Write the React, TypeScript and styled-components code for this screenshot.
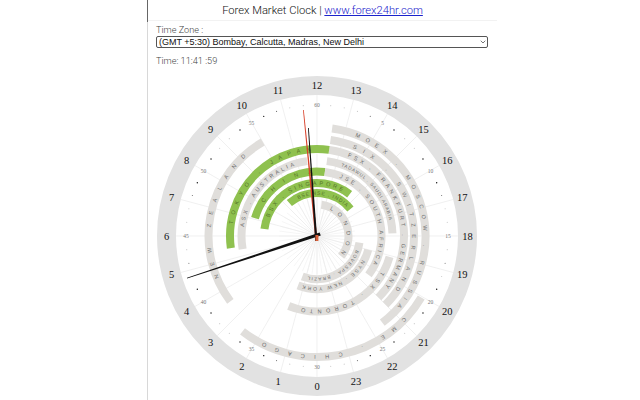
import styled, { createGlobalStyle } from 'styled-components';
import { ChevronDown } from 'lucide-react';

const GlobalStyle = createGlobalStyle`
  html, body {
    margin: 0;
    height: 100%;
    overflow: hidden;
    background: #fff;
    font-family: "Roboto", "Liberation Sans", sans-serif;
  }
`;

const Page = styled.div`
  width: 640px;
  height: 400px;
  padding-left: 147px;
  box-sizing: border-box;
  overflow: hidden;
`;

const Panel = styled.div`
  width: 350px;
  height: 400px;
  box-sizing: border-box;
  border-left: 1px solid #d8d8d8;
  position: relative;
`;

const TopMark = styled.div`
  position: absolute;
  left: -1px;
  top: 0;
  width: 1px;
  height: 22px;
  background: #666;
`;

const Header = styled.div`
  height: 20px;
  line-height: 22px;
  text-align: center;
  font-size: 11.2px;
  font-weight: 300;
  color: #111;
  border-bottom: 1px solid #f2f2f2;
  white-space: nowrap;

  a {
    color: #1a22cc;
  }
`;

const Form = styled.div`
  padding: 3px 9px 0 8px;
`;

const Label = styled.div`
  font-size: 9.2px;
  line-height: 12px;
  font-weight: 300;
  color: #444;
`;

const SelectBox = styled.div`
  position: relative;
  height: 12px;
  margin-bottom: 7px;

  svg {
    position: absolute;
    right: 1px;
    top: 2px;
    color: #333;
    pointer-events: none;
  }
`;

const ZoneSelect = styled.select`
  display: block;
  width: 100%;
  height: 12px;
  margin: 0;
  padding: 0 0 0 2px;
  appearance: none;
  font-family: "Liberation Sans", sans-serif;
  font-size: 9px;
  line-height: 10px;
  color: #111;
  background: #fff;
  border: 1px solid #555;
  border-radius: 2px;
`;

const ClockFace = styled.svg`
  display: block;
  margin: 8px 0 0 -1px;
`;

const HourLabel = styled.text`
  font-family: "Liberation Serif", serif;
  font-size: 10.5px;
  fill: #111;
  text-anchor: middle;
  dominant-baseline: central;
`;

const MinuteLabel = styled.text`
  font-family: "Liberation Serif", serif;
  font-size: 5.5px;
  fill: #777;
  text-anchor: middle;
  dominant-baseline: central;
`;

const BandText = styled.text<{ $open: boolean; $size: number }>`
  font-family: "Liberation Sans", sans-serif;
  font-size: ${(p) => p.$size}px;
  fill: ${(p) => (p.$open ? '#557528' : '#6e6e6e')};
`;

interface Band {
  id: string;
  r: number;
  from: number;
  to: number;
  open: boolean;
  text: string;
  textFrom: number;
  textTo: number;
  size?: number;
}

const CX = 170;
const CY = 161;

const bands: Band[] = [
  { id: 'moex', r: 108.5, from: 8, to: 143, open: false, text: 'MOEX . MOSCOW . RUSSIA', textFrom: 21, textTo: 129 },
  { id: 'nz', r: 108.5, from: 233, to: 330, open: false, text: 'NEW ZEALAND', textFrom: 247, textTo: 316 },
  { id: 'cme', r: 121, from: 120.5, to: 218, open: false, text: 'CME . CHICAGO', textFrom: 133, textTo: 205 },
  { id: 'six', r: 97, from: 8, to: 135, open: false, text: 'SIX . SWITZERLAND', textFrom: 22, textTo: 122 },
  { id: 'fsx', r: 87, from: 8, to: 135, open: false, text: 'FSX . FRANKFURT . GERMANY', textFrom: 21, textTo: 124 },
  { id: 'tokyo', r: 87, from: 262, to: 368, open: true, text: 'TOKYO . JAPAN', textFrom: 278, textTo: 353 },
  { id: 'tad', r: 75.5, from: 7.5, to: 88, open: false, text: 'TADAWUL . SAUDI ARABIA', textFrom: 19, textTo: 75, size: 4.6 },
  { id: 'asx', r: 75.5, from: 260, to: 352.5, open: false, text: 'ASX . AUSTRALIA', textFrom: 277, textTo: 339 },
  { id: 'tsx', r: 75.5, from: 106, to: 202, open: false, text: 'TSX . TORONTO', textFrom: 119, textTo: 189 },
  { id: 'china', r: 64.5, from: 286, to: 367, open: true, text: 'CHINA', textFrom: 302, textTo: 352 },
  { id: 'jse', r: 64.5, from: 7, to: 127, open: false, text: 'JSE . SOUTH AFRICA', textFrom: 21, textTo: 113 },
  { id: 'bsx', r: 53, from: 277.5, to: 398, open: true, text: 'BSX . SINGAPORE', textFrom: 291, textTo: 385 },
  { id: 'nyse', r: 53, from: 105, to: 201, open: false, text: 'NYSE . NEW YORK', textFrom: 118, textTo: 192, size: 5 },
  { id: 'bse', r: 43, from: 320, to: 411, open: true, text: 'BSE NSE . INDIA', textFrom: 333, textTo: 400, size: 5 },
  { id: 'bov', r: 43, from: 99, to: 200, open: false, text: 'BOVESPA . BRAZIL', textFrom: 110, textTo: 188, size: 4.6 },
  { id: 'lon', r: 31.5, from: 8, to: 130, open: false, text: 'LONDON', textFrom: 26, textTo: 118 },
];

const strongDots = [6, 9, 11, 19, 21, 24, 26, 34, 36, 39, 41, 49, 51, 54, 56];
const mediumDots = [4, 12, 17, 27, 33, 43, 48, 57];

const polar = (r: number, deg: number) => {
  const a = ((deg - 90) * Math.PI) / 180;
  return [CX + r * Math.cos(a), CY + r * Math.sin(a)];
};

const arc = (r: number, from: number, to: number) => {
  const [x1, y1] = polar(r, from);
  const [x2, y2] = polar(r, to);
  return `M${x1.toFixed(2)} ${y1.toFixed(2)}A${r} ${r} 0 ${to - from > 180 ? 1 : 0} 1 ${x2.toFixed(2)} ${y2.toFixed(2)}`;
};

const range = (n: number) => Array.from({ length: n }, (_, i) => i);

function Clock() {
  return (
    <ClockFace width={340} height={330} viewBox="0 0 340 330">
      <circle cx={CX} cy={CY} r={150.5} fill="none" stroke="#e2e2e2" strokeWidth={19} />

      {range(24).map((i) => {
        const [x, y] = polar(141, i * 15);
        return <line key={i} x1={CX} y1={CY} x2={x} y2={y} stroke="#e9e9e9" strokeWidth={0.7} />;
      })}
      {range(48).map((i) => {
        const [x, y] = polar(38, i * 7.5);
        return <line key={i} x1={CX} y1={CY} x2={x} y2={y} stroke="#ececec" strokeWidth={0.5} />;
      })}

      {range(60).map((m) => {
        const [x, y] = polar(131, m * 6);
        if (m % 5 === 0) {
          return (
            <MinuteLabel key={m} x={x} y={y}>
              {m === 0 ? 60 : m}
            </MinuteLabel>
          );
        }
        const strong = strongDots.includes(m);
        const medium = mediumDots.includes(m);
        return (
          <circle
            key={m}
            cx={x}
            cy={y}
            r={strong ? 0.7 : 0.6}
            fill={strong ? '#111' : medium ? '#777' : '#ccc'}
          />
        );
      })}

      {bands.map((b) => (
        <path
          key={b.id}
          d={arc(b.r, b.from, b.to)}
          fill="none"
          stroke={b.open ? '#8fc14f' : '#e0dedb'}
          strokeWidth={8}
        />
      ))}

      {bands.map((b) => {
        const size = b.size ?? 5.6;
        const textR = b.r - size * 0.36;
        const length = (((b.textTo - b.textFrom) * Math.PI) / 180) * textR + size * 0.7;
        return (
          <g key={b.id}>
            <path id={`t-${b.id}`} d={arc(textR, b.textFrom, b.textFrom + 170)} fill="none" />
            <BandText $open={b.open} $size={size}>
              <textPath href={`#t-${b.id}`} textLength={length} lengthAdjust="spacing">
                {b.text}
              </textPath>
            </BandText>
          </g>
        );
      })}

      {range(24).map((h) => {
        const [x, y] = polar(150.5, (h - 12) * 15);
        return (
          <HourLabel key={h} x={x} y={y}>
            {h}
          </HourLabel>
        );
      })}

      <polygon points="156,35 168.4,166 170.6,166 156.8,35" fill="#d8402a" />
      <polygon points="161,53 168.2,166 170.4,165.8 161.8,53" fill="#111" />
      <polygon points="40,202.8 172.6,157.6 173.8,160.6 40,203.6" fill="#111" />
      <rect x={168.4} y={160} width={3} height={6} fill="#d8603a" />
    </ClockFace>
  );
}

export default function App() {
  return (
    <Page>
      <GlobalStyle />
      <Panel>
        <TopMark />
        <Header>
          Forex Market Clock | <a href="#site">www.forex24hr.com</a>
        </Header>
        <Form>
          <Label>Time Zone :</Label>
          <SelectBox>
            <ZoneSelect defaultValue="ist">
              <option value="ist">(GMT +5:30) Bombay, Calcutta, Madras, New Delhi</option>
            </ZoneSelect>
            <ChevronDown size={8} strokeWidth={2} />
          </SelectBox>
          <Label>Time: 11:41 :59</Label>
        </Form>
        <Clock />
      </Panel>
    </Page>
  );
}
